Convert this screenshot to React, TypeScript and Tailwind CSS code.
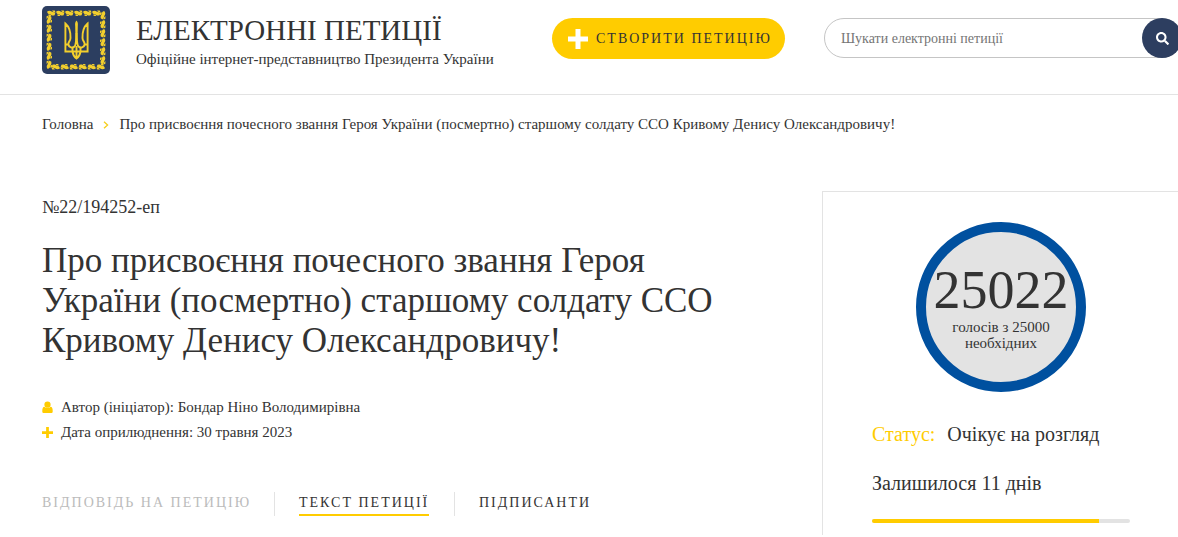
import { FaSearch } from "react-icons/fa";

const leafOffsets = [5, 14, 23, 32, 41, 50];
const sides = [0, 90, 180, 270];

function Emblem() {
  return (
    <svg viewBox="0 0 68 68" className="size-[68px] shrink-0" role="img" aria-label="Герб України">
      <rect width="68" height="68" rx="5" fill="#2c3e60" />
      <g fill="#f3cf2d">
        {sides.map((angle) => (
          <g key={angle} transform={`rotate(${angle} 34 34)`}>
            {leafOffsets.map((x) => (
              <g key={x} transform={`translate(${x} 4.6)`}>
                <path d="M0 1.2C1.4 -.2 3.4 -.2 4.6 .9L8.4 2.2 7.6 4.6C5.4 5.2 4.2 4.6 3.4 3.6 2 4 .6 3.2 0 1.2Z" />
                <path d="M5 0H7.8L8.6 1.8 6.4 1.4ZM1.2 3.8H3.6L4.2 5.4H1.8Z" />
              </g>
            ))}
          </g>
        ))}
      </g>
      <g fill="none" stroke="#f3cf2d" strokeWidth="1.9" strokeLinejoin="miter">
        <path d="M23.4 17.5V45.5H45.6V17.5C41.5 21 40.3 26 40.5 32C40.6 35.5 43 35.5 42.6 38.5C42.2 41.5 38.5 42.5 36.5 40.5C34.8 38.8 34.7 34 34.5 27C34.3 34 34.2 38.8 32.5 40.5C30.5 42.5 26.8 41.5 26.4 38.5C26 35.5 28.4 35.5 28.5 32C28.7 26 27.5 21 23.4 17.5Z" />
        <path d="M23.4 38.5H26.4M42.6 38.5H45.6M30.5 41.5V45.5C31 49 32.3 51 34.5 52.5C36.7 51 38 49 38.5 45.5V41.5M34.5 40V52" />
      </g>
      <path d="M34.5 14.5C36 16 36 18 35.8 20L35.5 34H33.5L33.2 20C33 18 33 16 34.5 14.5Z" fill="#f3cf2d" />
    </svg>
  );
}

function PersonIcon() {
  return (
    <svg viewBox="0 0 12 13" className="h-[13px] w-[11px] shrink-0" fill="#fc0" aria-hidden="true">
      <circle cx="6" cy="3.4" r="3.4" />
      <path d="M2.6 5.8C1 6 .3 7.5 .3 10.5C.3 12 1 12.6 2.3 12.6H9.7C11 12.6 11.7 12 11.7 10.5C11.7 7.5 11 6 9.4 5.8C7.6 7.6 4.4 7.6 2.6 5.8Z" />
    </svg>
  );
}

function PlusIcon({ className }: { className: string }) {
  return (
    <svg viewBox="0 0 20 20" className={className} fill="currentColor" aria-hidden="true">
      <path d="M7.5 0H12.5V7.5H20V12.5H12.5V20H7.5V12.5H0V7.5H7.5Z" />
    </svg>
  );
}

export default function App() {
  return (
    <div className="min-h-screen overflow-x-hidden bg-white font-['Liberation_Serif',serif] text-[#333]">
      <header className="flex h-[95px] items-start border-b border-[#e3e3e3] pl-[42px]">
        <a href="#home" className="mt-1.5 flex w-[510px] shrink-0 gap-[26px]">
          <Emblem />
          <div>
            <p className="mt-2 text-[29px] leading-8 whitespace-nowrap">ЕЛЕКТРОННІ ПЕТИЦІЇ</p>
            <p className="mt-[3px] text-[15px] leading-5 whitespace-nowrap">
              Офіційне інтернет-представництво Президента України
            </p>
          </div>
        </a>
        <button
          type="button"
          className="mt-[18px] flex h-[41px] w-[233px] shrink-0 items-center gap-2 rounded-full bg-[#fc0] pl-4 text-[14px] tracking-[2px] whitespace-nowrap"
        >
          <PlusIcon className="size-5 shrink-0 text-white" />
          СТВОРИТИ ПЕТИЦІЮ
        </button>
        <form role="search" className="mt-[18px] -mr-1 ml-[39px] flex h-10 min-w-0 flex-1 rounded-full border border-[#c5c5c5]">
          <input
            type="search"
            aria-label="Шукати електронні петиції"
            placeholder="Шукати електронні петиції"
            className="min-w-0 flex-1 rounded-full bg-transparent pl-4 text-[14px] outline-none placeholder:text-[#757575]"
          />
          <button
            type="submit"
            aria-label="Шукати"
            className="-m-px flex size-10 shrink-0 items-center justify-center rounded-full bg-[#2d3e60] text-white"
          >
            <FaSearch size={13} />
          </button>
        </form>
      </header>

      <nav aria-label="Навігація" className="flex h-[96px] items-start gap-2.5 pt-[19px] pl-[42px] text-[15px] leading-5 whitespace-nowrap">
        <a href="#home">Головна</a>
        <svg viewBox="0 0 6 8" className="mt-[7px] h-2 w-1.5" fill="none" stroke="#f5cf1b" strokeWidth="1.3" aria-hidden="true">
          <path d="M1 .7 4.6 4 1 7.3" />
        </svg>
        <span>Про присвоєння почесного звання Героя України (посмертно) старшому солдату ССО Кривому Денису Олександровичу!</span>
      </nav>

      <div className="flex items-stretch pl-[42px]">
        <main className="min-w-0 flex-1">
          <p className="mt-1.5 text-[18px] leading-5">№22/194252-еп</p>
          <h1 className="mt-6 text-[35px] leading-10">
            Про присвоєння почесного звання Героя
            <br />
            України (посмертно) старшому солдату ССО
            <br />
            Кривому Денису Олександровичу!
          </h1>
          <div className="mt-[34px] text-[15px] leading-[25px]">
            <p className="flex items-center gap-2">
              <PersonIcon />
              Автор (ініціатор): Бондар Ніно Володимирівна
            </p>
            <p className="flex items-center gap-2">
              <PlusIcon className="size-[11px] shrink-0 text-[#fc0]" />
              Дата оприлюднення: 30 травня 2023
            </p>
          </div>
          <div className="mt-[47px] flex h-6 items-start text-[14px] leading-[22px] tracking-[2px] whitespace-nowrap">
            <div className="h-6 w-[233px] border-r border-[#e3e3e3]">
              <button type="button" disabled className="h-6 border-b-2 border-transparent text-[#bbb]">
                ВІДПОВІДЬ НА ПЕТИЦІЮ
              </button>
            </div>
            <div className="h-6 w-[180px] border-r border-[#e3e3e3] pl-6">
              <button type="button" className="h-6 border-b-2 border-[#fc0]">ТЕКСТ ПЕТИЦІЇ</button>
            </div>
            <div className="h-6 pl-6">
              <button type="button" className="h-6 border-b-2 border-transparent">ПІДПИСАНТИ</button>
            </div>
          </div>
        </main>

        <aside className="-mr-0.5 w-[358px] shrink-0 border-t border-l border-[#e3e3e3] pt-[30px] pr-[50px] pl-[49px]">
          <div className="mx-auto flex size-[170px] flex-col items-center rounded-full border-10 border-[#00509f] bg-[#e3e3e3] pt-[30px] text-center">
            <strong className="text-[54px] leading-[56px] font-normal">25022</strong>
            <span className="mt-px text-[15px] leading-4">
              голосів з 25000
              <br />
              необхідних
            </span>
          </div>
          <p className="mt-8 flex gap-3 text-[20px] leading-5 whitespace-nowrap">
            <span className="text-[#fc0]">Статус:</span>
            <span>Очікує на розгляд</span>
          </p>
          <p className="mt-[29px] text-[20px] leading-5">Залишилося 11 днів</p>
          <div
            role="progressbar"
            aria-label="Залишилося 11 днів"
            aria-valuenow={88}
            className="mt-[26px] mb-3 h-1 overflow-hidden rounded-full bg-[#e3e3e3]"
          >
            <div className="h-full w-[88%] bg-[#fc0]" />
          </div>
        </aside>
      </div>
    </div>
  );
}
